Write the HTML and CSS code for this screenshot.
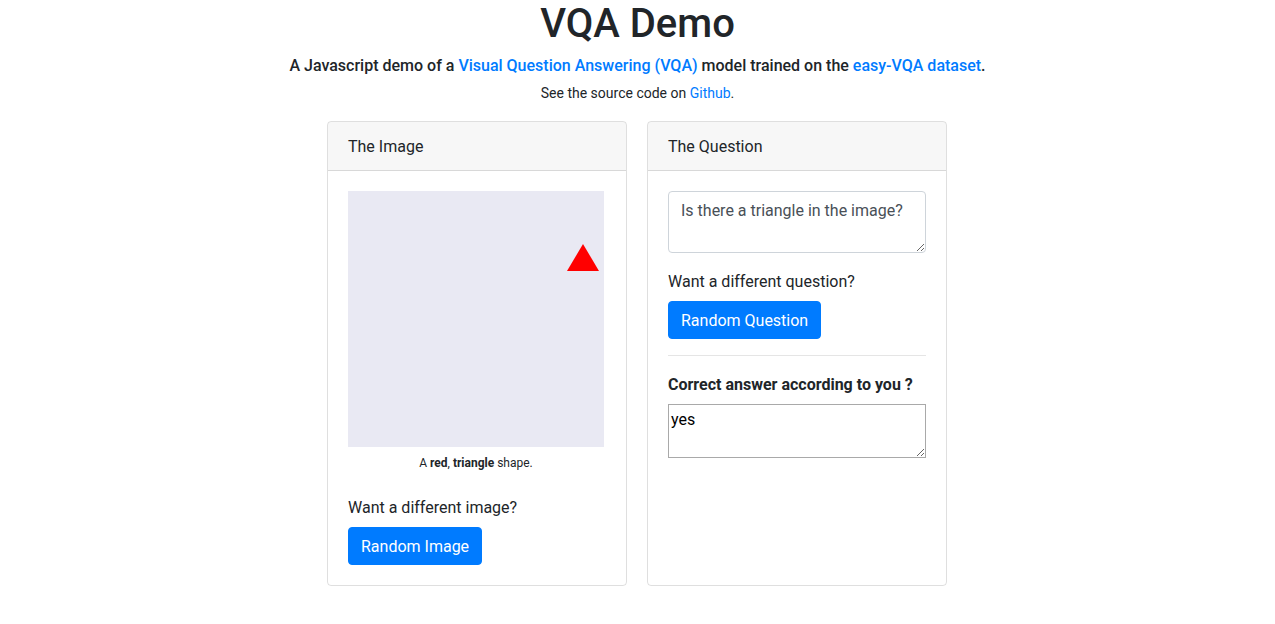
FILE: index.html
```html
<!DOCTYPE html>
<html lang="en">
<head>
<meta charset="utf-8">
<title>VQA Demo</title>
<link rel="stylesheet" href="styles.css">
</head>
<body>
<div class="page">
  <h1 class="title">VQA Demo</h1>
  <p class="lead">A Javascript demo of a <a href="#">Visual Question Answering (VQA)</a> model trained on the <a href="#">easy-VQA dataset</a>.</p>
  <p class="source">See the source code on <a href="#">Github</a>.</p>
  <div class="cards">
    <div class="card">
      <div class="card-header">The Image</div>
      <div class="card-body">
        <div class="image">
          <svg width="256" height="256" viewBox="0 0 256 256">
            <rect width="256" height="256" fill="#e9e9f3"/>
            <polygon points="235,53 251,80 219,80" fill="#ff0000"/>
          </svg>
        </div>
        <p class="caption">A <b>red</b>, <b>triangle</b> shape.</p>
        <p class="prompt">Want a different image?</p>
        <button class="btn">Random Image</button>
      </div>
    </div>
    <div class="card">
      <div class="card-header">The Question</div>
      <div class="card-body">
        <textarea class="form-control" rows="2">Is there a triangle in the image?</textarea>
        <p class="prompt">Want a different question?</p>
        <button class="btn">Random Question</button>
        <hr class="divider">
        <p class="answer-label">Correct answer according to you ?</p>
        <textarea class="answer" rows="2">yes</textarea>
      </div>
    </div>
  </div>
</div>
</body>
</html>
```

FILE: styles.css
```css
* { box-sizing: border-box; }
html, body { margin: 0; padding: 0; }
body {
  font-family: Roboto, "Liberation Sans", Arial, sans-serif;
  font-size: 16px;
  line-height: 1.5;
  color: #212529;
  background: #fff;
}
a { color: #007bff; text-decoration: none; }
.page {
  display: flex;
  flex-direction: column;
  align-items: center;
}
.title {
  margin: 0 0 6px;
  font-size: 40px;
  font-weight: 500;
  line-height: 48px;
}
.lead {
  margin: 0 0 5px;
  font-size: 16px;
  font-weight: 500;
  line-height: 24px;
}
.source {
  margin: 0 0 17px;
  font-size: 14px;
  line-height: 21px;
}
.cards {
  display: flex;
  gap: 20px;
  align-items: stretch;
  padding-right: 1px;
}
.card {
  width: 300px;
  border: 1px solid rgba(0,0,0,.125);
  border-radius: 4px;
  display: flex;
  flex-direction: column;
}
.card-header {
  padding: 13px 20px 11px;
  line-height: 24px;
  background: rgba(0,0,0,.03);
  border-bottom: 1px solid rgba(0,0,0,.125);
  border-radius: 3px 3px 0 0;
}
.card-body {
  padding: 20px;
  display: flex;
  flex-direction: column;
  align-items: flex-start;
  flex: 1;
}
.image { width: 256px; height: 256px; }
.image svg { display: block; }
.caption {
  width: 256px;
  margin: 7px 0 0;
  font-size: 12px;
  line-height: 18px;
  text-align: center;
}
.caption b { font-weight: 700; }
.prompt {
  margin: 17px 0 7px;
  line-height: 24px;
}
.caption + .prompt { margin-top: 24px; }
.btn {
  font-family: inherit;
  font-size: 16px;
  line-height: 24px;
  padding: 7px 12px 5px;
  color: #fff;
  background: #007bff;
  border: 1px solid #007bff;
  border-radius: 4px;
  cursor: pointer;
}
.form-control {
  width: 100%;
  height: 62px;
  padding: 7px 12px 5px;
  font-family: inherit;
  font-size: 16px;
  line-height: 24px;
  color: #495057;
  border: 1px solid #ced4da;
  border-radius: 4px;
  resize: vertical;
  display: block;
  margin: 0;
}
.divider {
  width: 100%;
  margin: 16px 0;
  border: 0;
  border-top: 1px solid rgba(0,0,0,.1);
}
.answer-label {
  margin: 1px 0 7px;
  font-weight: 700;
  line-height: 24px;
}
.answer {
  width: 100%;
  height: 54px;
  padding: 3px 2px 1px;
  font-family: inherit;
  font-size: 16px;
  line-height: 24px;
  color: #000;
  border: 1px solid #a9a9a9;
  margin: 0;
  display: block;
}
```
